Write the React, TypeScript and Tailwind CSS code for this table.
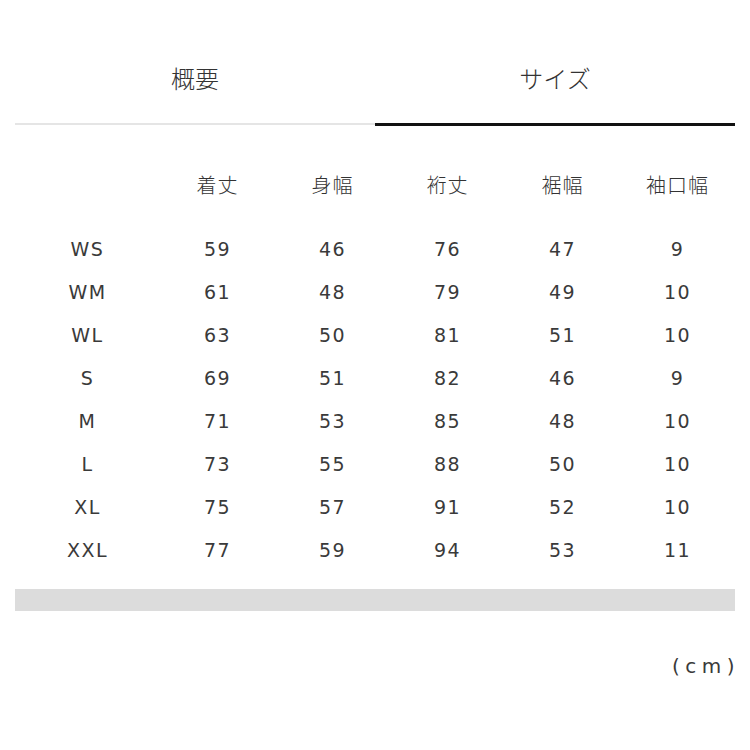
import React from "react";

const rows: [string, string, string, string, string, string][] = [
  ["WS", "59", "46", "76", "47", "9"],
  ["WM", "61", "48", "79", "49", "10"],
  ["WL", "63", "50", "81", "51", "10"],
  ["S", "69", "51", "82", "46", "9"],
  ["M", "71", "53", "85", "48", "10"],
  ["L", "73", "55", "88", "50", "10"],
  ["XL", "75", "57", "91", "52", "10"],
  ["XXL", "77", "59", "94", "53", "11"],
];

const headers = ["着丈", "身幅", "裄丈", "裾幅", "袖口幅"];

export default function App() {
  return (
    <div className="w-[750px] h-[750px] bg-white text-[#333] px-[15px]">
      <div className="flex pt-[59px]">
        <div className="w-1/2 flex flex-col items-center">
          <div className="h-[38px] flex items-center text-[24px] font-['Noto_Sans_CJK_JP',sans-serif] font-light">
            概要
          </div>
          <div className="mt-[26px] h-[3px] w-full border-t-2 border-[#e5e5e5]" />
        </div>
        <div className="w-1/2 flex flex-col items-center">
          <div className="h-[38px] flex items-center text-[24px] font-['Noto_Sans_CJK_JP',sans-serif] font-light">
            サイズ
          </div>
          <div className="mt-[26px] h-[3px] w-full bg-[#111]" />
        </div>
      </div>

      <div className="grid grid-cols-[145px_repeat(5,115px)] mt-[44px] h-[30px] items-center text-[20px] font-['Noto_Sans_CJK_JP',sans-serif] font-light tracking-[1px]">
        <div />
        {headers.map((h) => (
          <div key={h} className="text-center">
            {h}
          </div>
        ))}
      </div>

      <div className="mt-[28px] font-['DejaVu_Sans',sans-serif] text-[19px] tracking-[1.5px] text-[#3a3a3a]">
        {rows.map((r) => (
          <div key={r[0]} className="grid grid-cols-[145px_repeat(5,115px)] h-[43px] items-center">
            {r.map((c, i) => (
              <div key={i} className="text-center">
                {c}
              </div>
            ))}
          </div>
        ))}
      </div>

      <div className="mt-[17px] h-[22px] bg-[#dcdcdc]" />

      <div className="mt-[40px] flex justify-end font-['DejaVu_Sans',sans-serif] text-[20px] tracking-[5.5px] text-[#3a3a3a]">
        <span className="mr-[-5px]">(cm)</span>
      </div>
    </div>
  );
}
